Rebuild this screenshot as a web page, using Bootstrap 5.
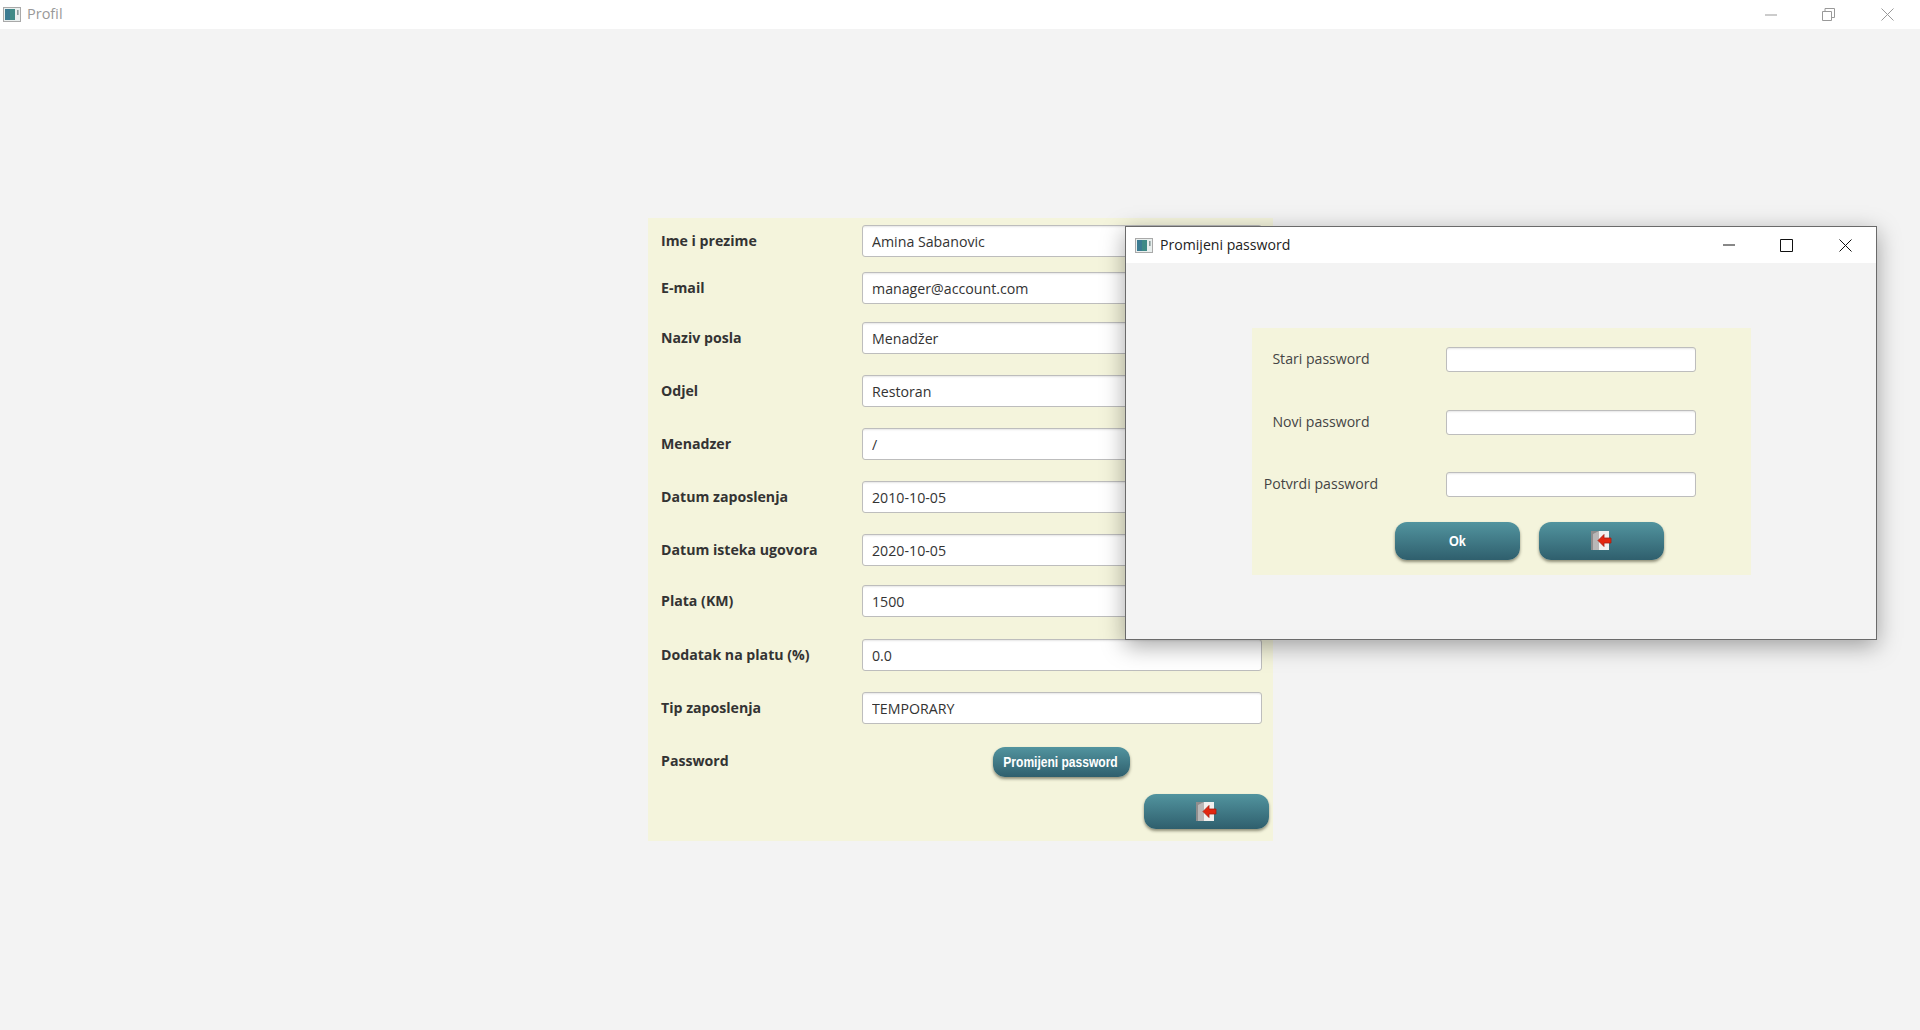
<!DOCTYPE html>
<html lang="en">
<head>
    <meta charset="UTF-8">
    <meta name="viewport" content="width=device-width, initial-scale=1.0">
    <title>Profil</title>
    <link href="https://cdn.jsdelivr.net/npm/bootstrap@5.3.0/dist/css/bootstrap.min.css" rel="stylesheet">
    <style>
        html, body {
            height: 100%;
        }
        body {
            background-color: #f3f3f3;
            font-family: "Open Sans", "Noto Sans", sans-serif;
            color: #333;
            overflow: hidden;
        }
        .title-strip {
            height: 29px;
            padding-left: 3px;
            background-color: #fff;
        }
        .title-strip .win-name {
            margin-left: 6px;
            font-size: 14.5px;
            line-height: 1;
            color: #999;
        }
        .win-ctl {
            display: block;
            flex: none;
        }
        .profil-panel {
            width: 625px;
            height: 623px;
            margin: 189px 0 0 648px;
            padding: 7px 4px 0 13px;
            background-color: #f4f4dc;
        }
        .profil-grid {
            display: grid;
            grid-template-columns: 201px 400px;
            grid-template-rows: 47px 50px 53px 53px 53px 53px 51px 54px 53px 55px 47px;
        }
        .field-name {
            height: 31px;
            display: flex;
            align-items: center;
            font-size: 14.15px;
            font-weight: 700;
            color: #333;
        }
        .field-name.field-pass {
            height: 28px;
        }
        .form-control.fx-input {
            height: 32px;
            min-height: 0;
            padding: 0 9px;
            font-size: 14.2px;
            color: #333;
            border: 1px solid #bdbdbd;
            border-radius: 3px;
            box-shadow: inset 0 2px 2px -1px rgba(0, 0, 0, .1);
        }
        .btn.fx-btn {
            padding: 0;
            color: #fff;
            border: 0;
            background: linear-gradient(#52949f, #2f5f6d);
            box-shadow: 0 2px 3px rgba(60, 60, 40, .55);
            font-family: "Liberation Sans", sans-serif;
            font-weight: 700;
        }
        .btn-change {
            width: 137px;
            height: 30px;
            margin-right: 2px;
            border-radius: 12px;
            font-size: 14px;
        }
        .btn-change span {
            display: inline-block;
            transform: scaleX(.86);
            white-space: nowrap;
        }
        .btn-exit-main {
            width: 125px;
            height: 35px;
            border-radius: 12px;
        }
        .pass-window {
            position: absolute;
            left: 1125px;
            top: 226px;
            width: 752px;
            height: 414px;
            background-color: #f3f3f3;
            border: 1px solid #6a6a6a;
            box-shadow: 0 6px 22px rgba(0, 0, 0, .35);
        }
        .pass-title {
            height: 36px;
            background-color: #fff;
        }
        .pass-title .win-name {
            margin-left: 7px;
            font-size: 14.1px;
            line-height: 1;
            color: #222;
        }
        .pass-panel {
            width: 499px;
            height: 247px;
            margin: 65px 0 0 126px;
            padding-top: 19px;
            background-color: #f4f4dc;
        }
        .pass-row {
            height: 62.5px;
        }
        .pass-label {
            width: 138px;
            margin-right: 56px;
            padding-top: 1px;
            text-align: center;
            font-size: 14.1px;
            color: #444;
        }
        .form-control.pass-input {
            width: 250px;
            height: 25px;
            min-height: 0;
            padding: 0 8px;
            border: 1px solid #bdbdbd;
            border-radius: 3px;
            box-shadow: inset 0 2px 2px -1px rgba(0, 0, 0, .1);
        }
        .pass-actions {
            margin: -13px 0 0 143px;
            gap: 19px;
        }
        .btn-pass {
            width: 125px;
            height: 38px;
            border-radius: 12px;
            font-size: 14px;
        }
        .btn-pass span {
            display: inline-block;
            padding-top: 2px;
            transform: scaleX(.9);
        }
    </style>
</head>
<body>
    <svg width="0" height="0" class="position-absolute">
        <symbol id="app-ico" viewBox="0 0 18 15">
            <rect x=".5" y=".5" width="17" height="14" fill="#e9efee" stroke="#a9a9a9"/>
            <rect x="2" y="2" width="10" height="11" fill="#3f8a86"/>
            <rect x="2" y="2" width="5" height="11" fill="#3b7b92"/>
            <rect x="14" y="3" width="1.600" height="5" fill="#8a9a9a"/>
        </symbol>
        <symbol id="exit-ico" viewBox="0 0 21 19">
            <rect width="18" height="19" fill="#f2f0ee"/>
            <path d="M0 0h8v19H0z" fill="#8f8d8d"/>
            <path d="M8 0 2 3v16h6z" fill="#b9b7b7"/>
            <path d="M20 7h-7V3.500L7 9.500l6 6V12h7z" fill="#e3260f" stroke="#a51d10" stroke-width=".8" stroke-linejoin="round"/>
        </symbol>
    </svg>

    <div class="title-strip d-flex align-items-center">
        <svg class="win-ctl" width="18" height="15"><use href="#app-ico"/></svg>
        <span class="win-name">Profil</span>
        <svg class="win-ctl ms-auto" width="14" height="14" viewBox="0 0 14 14" style="margin-right:44px"><path d="M1 7h12" stroke="#999"/></svg>
        <svg class="win-ctl" width="13" height="13" viewBox="0 0 13 13" style="margin-right:46px"><path d="M.5 3.500h9v9h-9zM3 3.500V.5h9.500v9H9.500" fill="none" stroke="#999"/></svg>
        <svg class="win-ctl" width="13" height="13" viewBox="0 0 13 13" style="margin-right:26px"><path d="M.5.500l12 12M12.500.500l-12 12" stroke="#999"/></svg>
    </div>

    <div class="profil-panel">
        <div class="profil-grid">
            <div class="field-name">Ime i prezime</div>
            <input class="form-control fx-input" type="text" value="Amina Sabanovic" readonly>
            <div class="field-name">E-mail</div>
            <input class="form-control fx-input" type="text" value="manager@account.com" readonly>
            <div class="field-name">Naziv posla</div>
            <input class="form-control fx-input" type="text" value="Menadžer" readonly>
            <div class="field-name">Odjel</div>
            <input class="form-control fx-input" type="text" value="Restoran" readonly>
            <div class="field-name">Menadzer</div>
            <input class="form-control fx-input" type="text" value="/" readonly>
            <div class="field-name">Datum zaposlenja</div>
            <input class="form-control fx-input" type="text" value="2010-10-05" readonly>
            <div class="field-name">Datum isteka ugovora</div>
            <input class="form-control fx-input" type="text" value="2020-10-05" readonly>
            <div class="field-name">Plata (KM)</div>
            <input class="form-control fx-input" type="text" value="1500" readonly>
            <div class="field-name">Dodatak na platu (%)</div>
            <input class="form-control fx-input" type="text" value="0.0" readonly>
            <div class="field-name">Tip zaposlenja</div>
            <input class="form-control fx-input" type="text" value="TEMPORARY" readonly>
            <div class="field-name field-pass">Password</div>
            <div class="text-center">
                <button type="button" class="btn fx-btn btn-change"><span>Promijeni password</span></button>
            </div>
        </div>
        <div class="d-flex justify-content-end">
            <button type="button" class="btn fx-btn btn-exit-main d-flex align-items-center justify-content-center">
                <svg width="21" height="19"><use href="#exit-ico"/></svg>
            </button>
        </div>
    </div>

    <div class="pass-window">
        <div class="pass-title d-flex align-items-center">
            <svg class="win-ctl" width="18" height="15" style="margin-left:9px"><use href="#app-ico"/></svg>
            <span class="win-name">Promijeni password</span>
            <svg class="win-ctl ms-auto" width="14" height="14" viewBox="0 0 14 14" style="margin-right:44px"><path d="M1 7h12" stroke="#111"/></svg>
            <svg class="win-ctl" width="13" height="13" viewBox="0 0 13 13" style="margin-right:46px"><path d="M.5.500h12v12H.5z" fill="none" stroke="#111"/></svg>
            <svg class="win-ctl" width="13" height="13" viewBox="0 0 13 13" style="margin-right:24px"><path d="M.5.500l12 12M12.500.500l-12 12" stroke="#111"/></svg>
        </div>
        <div class="pass-panel">
            <div class="pass-row d-flex">
                <div class="pass-label">Stari password</div>
                <input class="form-control pass-input" type="password">
            </div>
            <div class="pass-row d-flex">
                <div class="pass-label">Novi password</div>
                <input class="form-control pass-input" type="password">
            </div>
            <div class="pass-row d-flex">
                <div class="pass-label">Potvrdi password</div>
                <input class="form-control pass-input" type="password">
            </div>
            <div class="pass-actions d-flex">
                <button type="button" class="btn fx-btn btn-pass"><span>Ok</span></button>
                <button type="button" class="btn fx-btn btn-pass d-flex align-items-center justify-content-center">
                    <svg width="21" height="19"><use href="#exit-ico"/></svg>
                </button>
            </div>
        </div>
    </div>

    <script src="https://cdn.jsdelivr.net/npm/bootstrap@5.3.0/dist/js/bootstrap.bundle.min.js"></script>
</body>
</html>
